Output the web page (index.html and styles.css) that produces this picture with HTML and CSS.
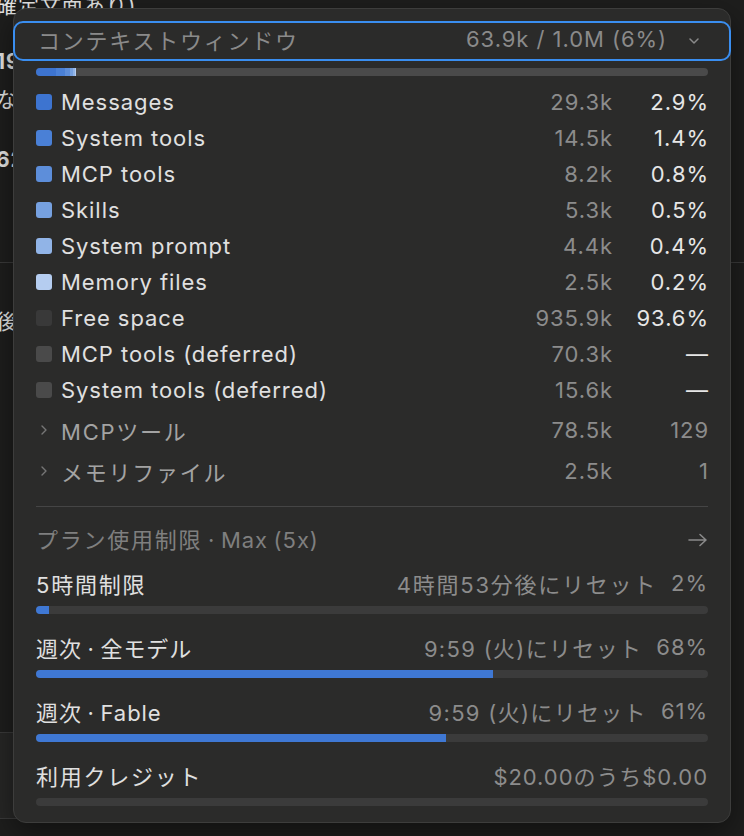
FILE: index.html
```html
<!DOCTYPE html>
<html lang="ja">
<head>
	<meta charset="UTF-8">
	<meta name="viewport" content="width=device-width, initial-scale=1">
	<title>コンテキストウィンドウ</title>
	<link rel="stylesheet" href="styles.css">
</head>
<body>
<div class="page">
	<div class="doc">
		<p class="doc-line l1">確定文面あり)</p>
		<p class="doc-line l2 strong">1980年代の記録</p>
		<p class="doc-line l3">なお、詳細は後述</p>
		<p class="doc-line l4 strong">62件の変更</p>
		<hr class="doc-rule">
		<p class="doc-line">後続の作業</p>
	</div>
	<div class="composer"></div>
</div>

<div class="popover">
	<button class="ctx-head">
		<span class="ctx-title ja">コンテキストウィンドウ</span>
		<span class="ctx-total">63.9k / 1.0M (6%)</span>
		<svg class="ctx-caret" width="10" height="6" viewBox="0 0 10 6"><polyline points="1,1 5,5 9,1" fill="none" stroke="#8a8a8a" stroke-width="1.5" stroke-linecap="round" stroke-linejoin="round"/></svg>
	</button>

	<div class="ctx-bar">
		<span class="seg c1" style="width:3%"></span>
		<span class="seg c2" style="width:1.35%"></span>
		<span class="seg c3" style="width:0.75%"></span>
		<span class="seg c4" style="width:0.45%"></span>
		<span class="seg c5" style="width:0.3%"></span>
		<span class="seg c6" style="width:0.15%"></span>
	</div>

	<ul class="legend">
		<li><i class="sw c1"></i><span class="name">Messages</span><span class="tok">29.3k</span><span class="pct">2.9%</span></li>
		<li><i class="sw c2"></i><span class="name">System tools</span><span class="tok">14.5k</span><span class="pct">1.4%</span></li>
		<li><i class="sw c3"></i><span class="name">MCP tools</span><span class="tok">8.2k</span><span class="pct">0.8%</span></li>
		<li><i class="sw c4"></i><span class="name">Skills</span><span class="tok">5.3k</span><span class="pct">0.5%</span></li>
		<li><i class="sw c5"></i><span class="name">System prompt</span><span class="tok">4.4k</span><span class="pct">0.4%</span></li>
		<li><i class="sw c6"></i><span class="name">Memory files</span><span class="tok">2.5k</span><span class="pct">0.2%</span></li>
		<li><i class="sw free"></i><span class="name">Free space</span><span class="tok">935.9k</span><span class="pct">93.6%</span></li>
		<li><i class="sw deferred"></i><span class="name">MCP tools (deferred)</span><span class="tok">70.3k</span><span class="pct">—</span></li>
		<li><i class="sw deferred"></i><span class="name">System tools (deferred)</span><span class="tok">15.6k</span><span class="pct">—</span></li>
	</ul>

	<ul class="groups">
		<li>
			<svg class="sw-caret" width="6" height="10" viewBox="0 0 6 10"><polyline points="1,1 5,5 1,9" fill="none" stroke="#767676" stroke-width="1.4" stroke-linecap="round" stroke-linejoin="round"/></svg>
			<span class="name ja">MCPツール</span><span class="tok">78.5k</span><span class="pct">129</span>
		</li>
		<li>
			<svg class="sw-caret" width="6" height="10" viewBox="0 0 6 10"><polyline points="1,1 5,5 1,9" fill="none" stroke="#767676" stroke-width="1.4" stroke-linecap="round" stroke-linejoin="round"/></svg>
			<span class="name ja">メモリファイル</span><span class="tok">2.5k</span><span class="pct">1</span>
		</li>
	</ul>

	<hr class="divider">

	<div class="plan-head">
		<span><span class="ja">プラン使用制限</span> · Max (5x)</span>
		<svg width="20" height="14" viewBox="0 0 20 14"><path d="M1 7H18M12 1.5L18 7L12 12.5" fill="none" stroke="#8a8a8a" stroke-width="1.6" stroke-linecap="round" stroke-linejoin="round"/></svg>
	</div>

	<div class="usage">
		<div class="usage-row"><span class="usage-name ja">5時間制限</span><span class="usage-reset ja">4時間53分後にリセット</span><span class="usage-pct">2%</span></div>
		<div class="track"><span class="fill" style="width:2%"></span></div>
	</div>
	<div class="usage">
		<div class="usage-row"><span class="usage-name">週次 · 全モデル</span><span class="usage-reset">9:59 (火)にリセット</span><span class="usage-pct">68%</span></div>
		<div class="track"><span class="fill" style="width:68%"></span></div>
	</div>
	<div class="usage">
		<div class="usage-row"><span class="usage-name">週次 · Fable</span><span class="usage-reset">9:59 (火)にリセット</span><span class="usage-pct">61%</span></div>
		<div class="track"><span class="fill" style="width:61%"></span></div>
	</div>
	<div class="usage">
		<div class="usage-row"><span class="usage-name ja">利用クレジット</span><span class="usage-credit">$20.00のうち$0.00</span></div>
		<div class="track"><span class="fill" style="width:0%"></span></div>
	</div>
</div>
</body>
</html>
```

FILE: styles.css
```css
* {
	box-sizing: border-box;
}
html, body {
	margin: 0;
	height: 100%;
}
body {
	position: relative;
	overflow: hidden;
	background: #1e1e1d;
	color: #e0e0e0;
	font-family: Inter, "Noto Sans CJK JP", sans-serif;
	font-size: 22px;
	letter-spacing: 0.043em;
}
.ja {
	letter-spacing: 0.08em;
}

/* page behind the popover */
.page {
	height: 100%;
	display: flex;
	flex-direction: column;
}
.doc {
	flex: 1;
	margin: -10px 0 0 -4px;
	font-size: 21px;
	color: #e6e6e6;
}
.doc-line {
	margin: 0;
	line-height: 32px;
}
.doc-line.strong {
	font-weight: 700;
}
.doc-line.l2 { margin-top: 24px; }
.doc-line.l3 { margin-top: 6px; }
.doc-line.l4 { margin-top: 28px; }
.doc-rule {
	margin: 86px 0 43px;
	border: 0;
	border-top: 1px solid #3a3a3a;
}
.composer {
	height: 87px;
	margin: 0 20px 17px -20px;
	background: #272726;
	border: 1px solid #3a3a3a;
	border-radius: 12px;
}

/* popover */
.popover {
	position: absolute;
	left: 13px;
	top: 8px;
	width: 718px;
	padding: 12px 0 16px;
	background: #2b2b2a;
	border: 1px solid #3d3d3c;
	border-radius: 13px;
	box-shadow: 0 10px 30px rgba(0, 0, 0, 0.45);
}

.ctx-head {
	display: flex;
	align-items: center;
	width: calc(100% + 2px);
	height: 40px;
	margin: 0 -1px;
	padding: 0 30px 4px 23px;
	background: transparent;
	border: 2px solid #3a8ef0;
	border-radius: 10px;
	color: #8a8a8a;
	font: inherit;
	letter-spacing: 0.043em;
	text-align: left;
}
.ctx-title {
	flex: 1;
}
.ctx-caret {
	margin: 4px 0 0 22px;
}

.ctx-bar {
	display: flex;
	height: 8px;
	margin: 7px 22px 0;
	background: #4a4a4a;
	border-radius: 4px;
	overflow: hidden;
}

.c1 { background: #3d74d0; }
.c2 { background: #4a80d6; }
.c3 { background: #5d8eda; }
.c4 { background: #76a1e0; }
.c5 { background: #91b4e7; }
.c6 { background: #b5cdf0; }
.free { background: #393939; }
.deferred { background: #4a4a4a; }

.legend, .groups {
	list-style: none;
	margin: 0;
	padding: 0 22px;
}
.legend {
	margin-top: 8px;
}
.legend li, .groups li {
	display: flex;
	align-items: center;
	height: 36px;
}
.groups {
	margin-top: 1px;
}
.groups li {
	height: 41px;
	color: #a3a3a3;
}
.sw {
	width: 16px;
	height: 16px;
	border-radius: 3px;
	margin-right: 9px;
}
.sw-caret {
	width: 16px;
	margin-right: 9px;
	padding: 0 5px;
}
.name {
	flex: 1;
}
.tok {
	color: #8c8c8c;
	text-align: right;
	margin-right: -1px;
}
.pct {
	width: 97px;
	margin-right: -1px;
	text-align: right;
	color: #e6e6e6;
}
.groups .pct {
	color: #8c8c8c;
}

.divider {
	margin: 15px 22px 0;
	border: 0;
	border-top: 1px solid #454545;
}

.plan-head {
	display: flex;
	align-items: center;
	justify-content: space-between;
	height: 28px;
	margin: 19px 22px 0;
	padding-bottom: 4px;
	color: #7f7f7f;
	word-spacing: -1.5px;
}
.plan-head svg {
	margin-top: 4px;
}

.usage {
	margin: 21px 22px 0;
}
.plan-head + .usage {
	margin-top: 17px;
}
.usage-row {
	display: flex;
	align-items: center;
	height: 28px;
	padding-bottom: 4px;
}
.usage-name {
	flex: 1;
	word-spacing: -1.5px;
}
.usage-reset, .usage-pct, .usage-credit {
	color: #8c8c8c;
}
.usage-reset {
	letter-spacing: 0.06em;
}
.usage-reset.ja {
	letter-spacing: 0.08em;
}
.usage-pct {
	margin-left: 14px;
}
.track {
	height: 8px;
	margin-top: 7px;
	background: #3b3b3b;
	border-radius: 4px;
	overflow: hidden;
}
.fill {
	display: block;
	height: 100%;
	background: #3f78d4;
}
```
